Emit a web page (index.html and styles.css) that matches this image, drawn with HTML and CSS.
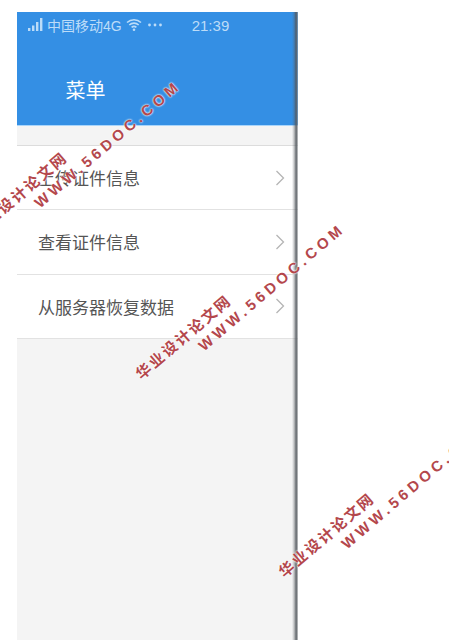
FILE: index.html
```html
<!DOCTYPE html>
<html lang="zh">
<head>
<meta charset="utf-8">
<title>菜单</title>
<link rel="stylesheet" href="styles.css">
</head>
<body>
<main class="phone">
  <header class="header">
    <div class="status">
      <svg class="signal" width="16" height="16" viewBox="0 0 16 16"><rect x="0" y="11" width="2.400" height="3" /><rect x="4" y="8.500" width="2.400" height="5.500" /><rect x="8" y="5" width="2.400" height="9" /><rect x="12" y="1" width="2.400" height="13" /></svg>
      <span class="carrier">中国移动4G</span>
      <svg class="wifi" width="16" height="14" viewBox="0 0 16 14" fill="none" stroke="currentColor" stroke-width="1.600"><path d="M1 4.500C5 .8 11 .8 15 4.500"/><path d="M3.300 7C6 4.500 10 4.500 12.700 7"/><path d="M5.600 9.400C7 8.200 9 8.200 10.400 9.400"/><circle cx="8" cy="11.800" r="1.300" fill="currentColor" stroke="none"/></svg>
      <svg class="dots" width="14" height="4" viewBox="0 0 14 4"><circle cx="1.500" cy="2" r="1.400"/><circle cx="7" cy="2" r="1.400"/><circle cx="12.500" cy="2" r="1.400"/></svg>
      <span class="time">21:39</span>
    </div>
    <h1 class="title">菜单</h1>
  </header>
  <ul class="menu">
    <li class="item"><span>上传证件信息</span><svg class="chev" width="10" height="16" viewBox="0 0 10 16"><path d="M1.500 1L8.500 8L1.500 15" /></svg></li>
    <li class="item"><span>查看证件信息</span><svg class="chev" width="10" height="16" viewBox="0 0 10 16"><path d="M1.500 1L8.500 8L1.500 15" /></svg></li>
    <li class="item"><span>从服务器恢复数据</span><svg class="chev" width="10" height="16" viewBox="0 0 10 16"><path d="M1.500 1L8.500 8L1.500 15" /></svg></li>
  </ul>
</main>
<div class="mark mark-a"><div>华业设计论文网</div><div class="url">WWW.56DOC.COM</div></div>
<div class="mark mark-b"><div>华业设计论文网</div><div class="url">WWW.56DOC.COM</div></div>
<div class="mark mark-c"><div>华业设计论文网</div><div class="url">WWW.56DOC.COM</div></div>
</body>
</html>
```
FILE: styles.css
```css
html, body {
  margin: 0;
  height: 640px;
  overflow: hidden;
  background: #fff;
}
body {
  position: relative;
  padding: 12px 0 0 17px;
  box-sizing: border-box;
  font-family: "Liberation Sans", "Noto Sans CJK SC", sans-serif;
}
.phone {
  position: relative;
  width: 281px;
  height: 628px;
  background: #f4f4f4;
}
.phone::after {
  content: "";
  position: absolute;
  top: 0;
  right: 0;
  bottom: 0;
  width: 6px;
  background: linear-gradient(90deg, rgba(90, 95, 100, 0), rgba(90, 95, 100, .35) 35%, rgba(80, 85, 90, .9) 70%, rgba(120, 125, 130, .8) 85%, rgba(170, 170, 170, .5));
}
.header {
  height: 114px;
  background: #348fe4;
  border-bottom: 1px solid #a9d5fb;
  box-sizing: border-box;
  color: #fff;
}
.status {
  display: flex;
  align-items: center;
  height: 26px;
  padding-left: 11px;
  color: #bcdcf8;
  font-size: 14px;
}
.signal { fill: currentColor; margin-right: 3px; }
.carrier { white-space: nowrap; }
.wifi { margin-left: 4px; }
.dots { margin-left: 6px; fill: currentColor; }
.time { margin-left: 30px; font-size: 15px; }
.title {
  margin: 0;
  padding: 39px 0 0 48.500px;
  font-size: 20px;
  font-weight: normal;
  line-height: 28px;
}
.menu {
  list-style: none;
  margin: 19px 0 0;
  padding: 0;
  background: #fff;
  border-top: 1px solid #dcdcdc;
  color: #555;
  font-size: 17px;
}
.item {
  display: flex;
  align-items: center;
  justify-content: space-between;
  height: 64.250px;
  box-sizing: border-box;
  padding: 0 13px 0 21px;
  border-bottom: 1px solid #e2e2e2;
}
.chev { fill: none; stroke: #b5b5b5; stroke-width: 1.300; }
.mark {
  position: absolute;
  transform: rotate(-40.500deg);
  transform-origin: 0 0;
  white-space: nowrap;
  color: #b4474c;
  font-family: "Noto Sans CJK SC", sans-serif;
  font-size: 15px;
  font-weight: 700;
  line-height: 20px;
  letter-spacing: 2.200px;
  text-shadow: 0 0 2px #fff, 0 0 2px #fff;
}
.url {
  margin-left: 66px;
  font-family: "Liberation Sans", sans-serif;
  letter-spacing: 4px;
}
.mark-a { left: -33px; top: 225px; }
.mark-b { left: 131px; top: 368px; }
.mark-c { left: 274px; top: 566px; }
```
